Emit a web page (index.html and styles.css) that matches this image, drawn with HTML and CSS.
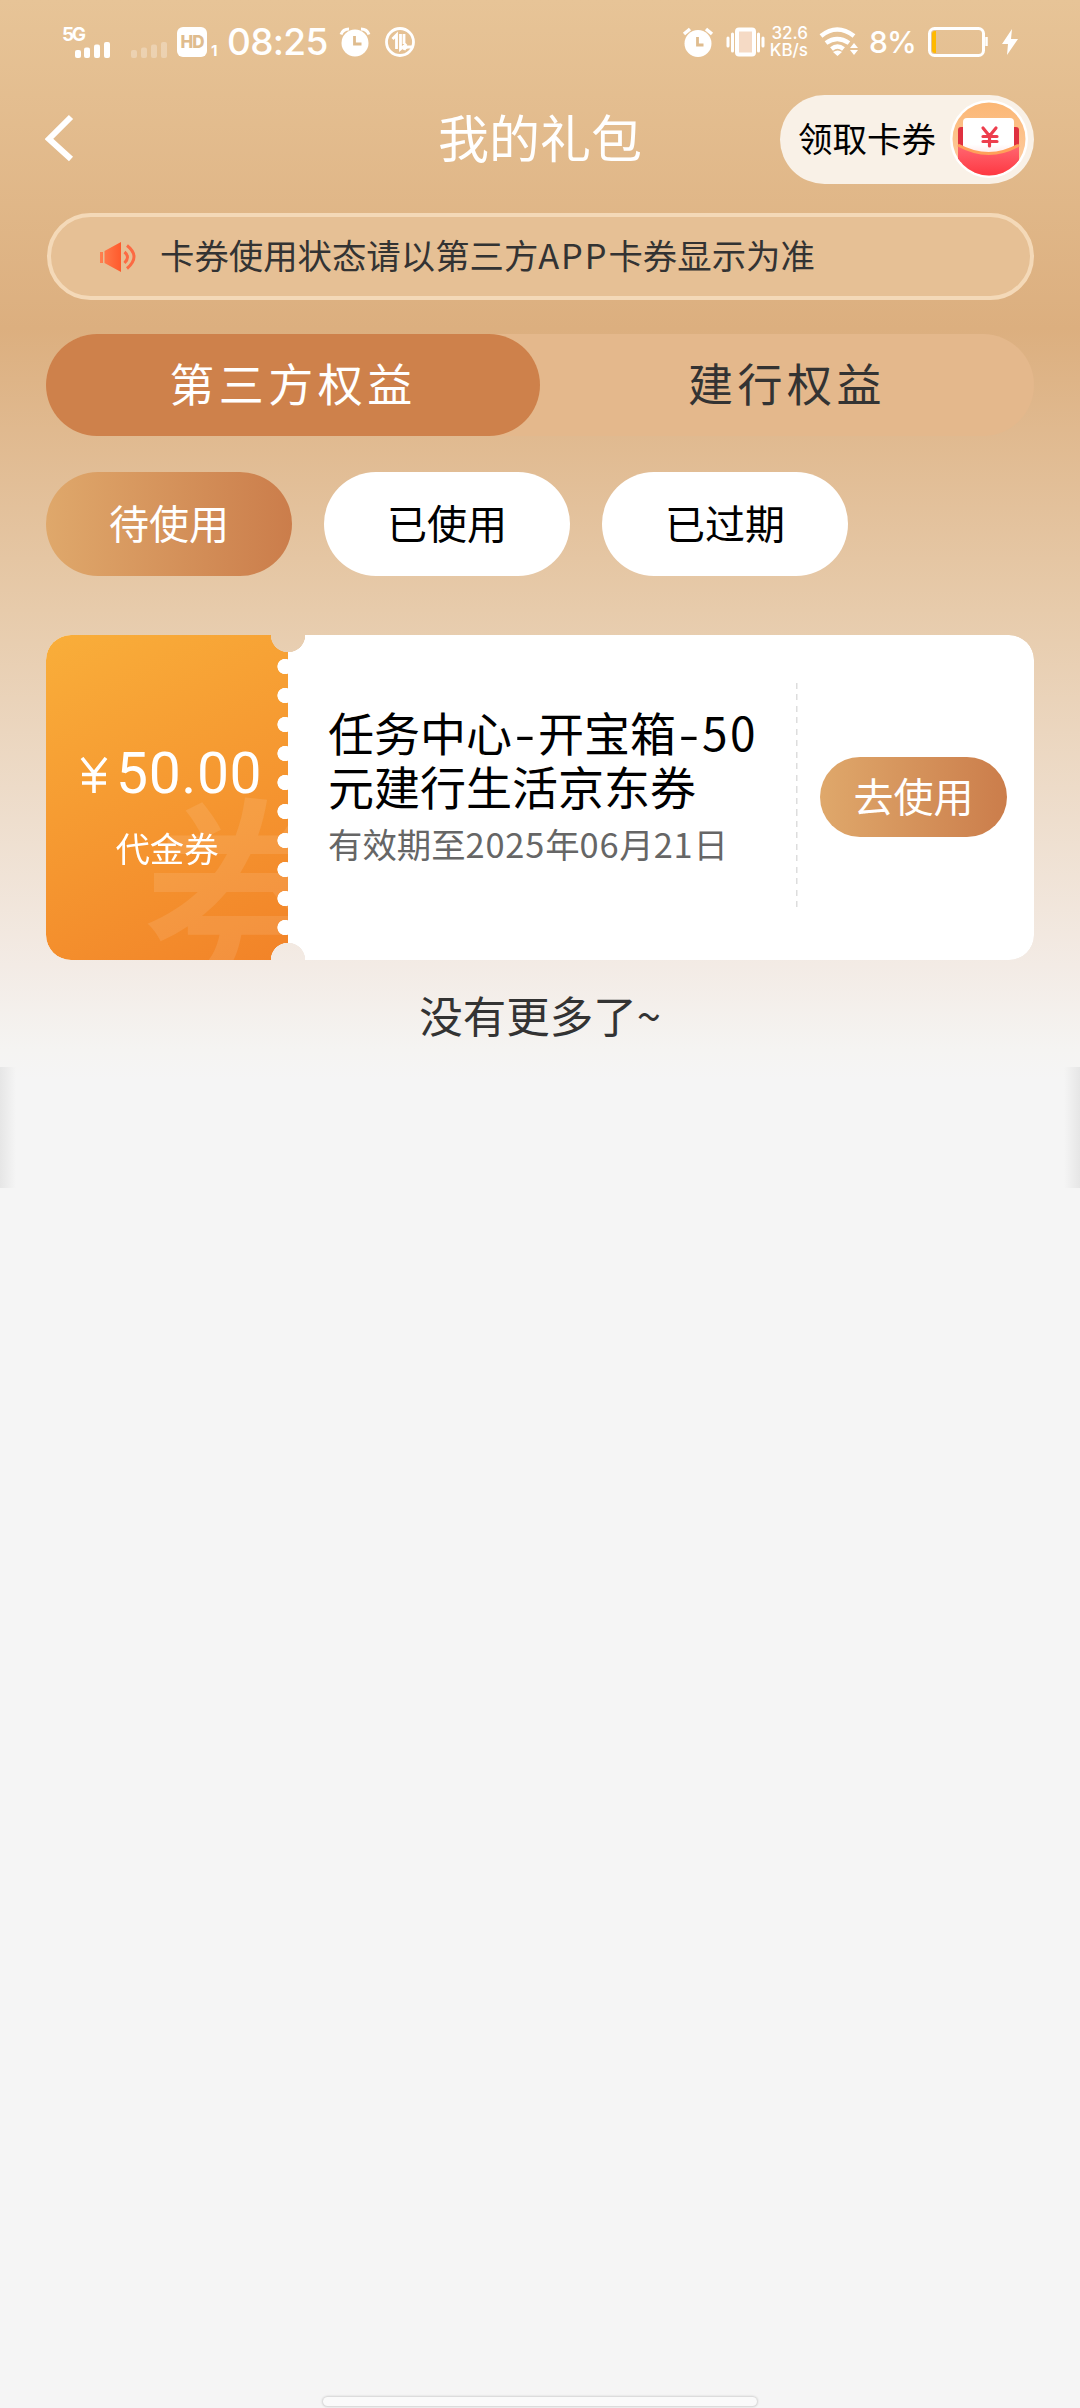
FILE: index.html
```html
<!DOCTYPE html>
<html lang="zh-CN">
<head>
<meta charset="utf-8">
<title>我的礼包</title>
<link rel="stylesheet" href="styles.css">
</head>
<body>
<div class="page">
  <div class="status">
    <svg class="signal" width="122" height="40" viewBox="0 0 122 40" fill="#fff">
      <g><rect x="13" y="28" width="6" height="8" rx="2"/><rect x="22" y="25.500" width="6" height="10.500" rx="2"/><rect x="32" y="22.500" width="6" height="13.500" rx="2"/><rect x="42" y="20" width="6" height="16" rx="2"/></g>
      <g opacity=".28"><rect x="69" y="28" width="6" height="8" rx="2"/><rect x="79" y="25.500" width="6" height="10.500" rx="2"/><rect x="89" y="22.500" width="6" height="13.500" rx="2"/><rect x="99" y="20" width="6" height="16" rx="2"/></g>
      <text class="net" x="0" y="18.500" textLength="24">5G</text>
    </svg>
    <span class="hd">HD</span><span class="sim">1</span>
    <span class="time">08:25</span>
    <svg class="alarm" width="32" height="32" viewBox="0 0 32 32"><circle cx="16" cy="17" r="13.500" fill="#fff"/><path d="M2 8.500 Q4 3 10 3M30 8.500Q28 3 22 3" fill="none" stroke="#fff" stroke-width="3"/><path d="M15.500 10v8h7" fill="none" stroke="#dfbc8e" stroke-width="2.800"/></svg>
    <svg class="data" width="32" height="32" viewBox="0 0 32 32" fill="none" stroke="#fff" stroke-width="2.800"><circle cx="16" cy="16" r="13.500"/><path d="M8.500 13l4-4v14M16.500 8v15l6-5M20 24q1-3 4-3h5M20 8v10"/></svg>
    <span class="grow"></span>
    <svg class="alarm2" width="32" height="32" viewBox="0 0 32 32"><circle cx="16" cy="17.500" r="13.500" fill="#fff"/><path d="M2 8l6-5M30 8l-6-5" stroke="#fff" stroke-width="3.500"/><path d="M15.500 11v8h6" fill="none" stroke="#dfbc8e" stroke-width="2.800"/></svg>
    <svg class="vibrate" width="40" height="30" viewBox="0 0 40 30" fill="none" stroke="#fff" stroke-width="3"><rect x="11" y="2.500" width="17" height="25" rx="2" fill="#f5dac5" stroke-width="4"/><path d="M6.500 7v17M32.500 7v17M2 11v8M37 11v8" stroke-linecap="round"/></svg>
    <span class="speed"><span>32.6</span><span>KB/s</span></span>
    <svg class="wifi" width="40" height="30" viewBox="0 0 40 30" fill="none" stroke="#fff" stroke-width="4.500"><path d="M2 9Q18-4 35 9M7 16q11-8 23 0M12.500 22q6-5 12 0"/><path d="M14 25q5-3 9 0l-4.500 4z" fill="#fff" stroke="none"/><path d="M31 21l4-5 4 5zM31 23l4 5 4-5z" fill="#fff" stroke="none"/></svg>
    <span class="percent">8%</span>
    <svg class="battery" width="60" height="30" viewBox="0 0 60 30"><rect x="1.500" y="1.500" width="54" height="27" rx="5" fill="none" stroke="#fff" stroke-width="3"/><path d="M4 7q0-3 3-3h1v22H7q-3 0-3-3z" fill="#ffb900"/><path d="M58.500 10v9" stroke="#fff" stroke-width="2.500"/></svg>
    <svg class="bolt" width="16" height="26" viewBox="0 0 16 26"><path d="M10 0L0 15h6L5 26 16 10H9z" fill="#fff"/></svg>
  </div>

  <header class="header">
    <svg class="back" width="30" height="48" viewBox="0 0 30 48"><path d="M26 3L4 25l22 20" fill="none" stroke="#fff" stroke-width="6"/></svg>
    <h1 class="title">我的礼包</h1>
    <div class="claim">
      <span>领取卡券</span>
      <svg width="78" height="78" viewBox="0 0 78 78">
        <defs>
          <clipPath id="disc"><circle cx="39" cy="39" r="36.500"/></clipPath>
          <linearGradient id="disc-bg" x2="0" y2="1"><stop stop-color="#fbb673"/><stop offset="1" stop-color="#fed0a8"/></linearGradient>
          <linearGradient id="pocket" x2="0" y2="1"><stop stop-color="#ff6872"/><stop offset="1" stop-color="#fe343e"/></linearGradient>
          <linearGradient id="paper" x2="0" y2="1"><stop offset=".6" stop-color="#fff"/><stop offset="1" stop-color="#ffd5d5"/></linearGradient>
        </defs>
        <circle cx="39" cy="39" r="39" fill="#fff"/>
        <g clip-path="url(#disc)">
          <rect width="78" height="78" fill="url(#disc-bg)"/>
          <rect x="8" y="27" width="61" height="35" rx="3" fill="#df303f"/>
          <rect x="13" y="18" width="51" height="44" rx="4" fill="url(#paper)"/>
          <path d="M8 45q31 17 61 0v33H8z" fill="url(#pocket)"/>
          <path d="M8 45q31 17 61 0" fill="none" stroke="#ffa05a" stroke-width="3"/>
        </g>
        <path d="M33 28l6.500 8 6.500-8M39.500 36v10M33 36.500h14M33 41.500h14" fill="none" stroke="#ed3e4d" stroke-width="3.200" stroke-linecap="round"/>
      </svg>
    </div>
  </header>

  <div class="notice">
    <svg width="38" height="32" viewBox="0 0 38 32"><defs><linearGradient id="horn" x1="0" x2="1"><stop stop-color="#ff8050"/><stop offset="1" stop-color="#ff5a2c"/></linearGradient></defs><path d="M1 11h3v11H1zM5.500 10L22 1v30L5.500 22z" fill="url(#horn)"/><path d="M25.500 11q6 5 0 11M28 4.500q14 11 0 23" fill="none" stroke="#fc6a43" stroke-width="3"/></svg>
    <span class="notice-text">卡券使用状态请以第三方<span class="app">APP</span>卡券显示为准</span>
  </div>

  <nav class="tabs"><span class="tab tab-on">第三方权益</span><span class="tab">建行权益</span></nav>
  <div class="filters"><span class="filter filter-on">待使用</span><span class="filter">已使用</span><span class="filter">已过期</span></div>

  <section class="card">
    <div class="value">
      <span class="watermark">券</span>
      <div class="amount"><svg width="28" height="36" viewBox="0 0 28 36" fill="none" stroke="#fff" stroke-width="3.600"><path d="M2 1l12 15L26 1M14 16v20M2 17.500h24M2 26h24"/></svg><span>50.00</span></div>
      <div class="kind">代金券</div>
      <div class="teeth"></div>
    </div>
    <div class="detail">
      <h2>任务中心<span class="dash">-</span>开宝箱<span class="dash">-</span><span class="fifty">50</span><br>元建行生活京东券</h2>
      <p>有效期至<span class="num">2025</span>年<span class="num">06</span>月<span class="num">21</span>日</p>
    </div>
    <div class="action"><span class="use">去使用</span></div>
  </section>
  <div class="end">没有更多了~</div>
  <div class="edges"></div>
  <div class="home"></div>
</div>
</body>
</html>
```
FILE: styles.css
```css
* { box-sizing: border-box; }
body { margin: 0; background: #f5f5f5; font-family: "Noto Sans CJK SC", sans-serif; }
.page {
  width: 1080px; height: 2408px; display: flex; flex-direction: column; overflow: hidden;
  background: linear-gradient(#e7c497 0, #dcaf7f 328px, #e7cbab 610px, #f3ebe5 965px, #f5f4f2 1050px, #f5f5f5 1080px);
}
svg { display: block; flex: none; }

.status { height: 84px; padding: 0 62px; display: flex; align-items: center; color: #fff; font-family: Inter, sans-serif; }
.signal { overflow: visible; margin-right: -7px; }
.net { font: 700 19px Inter, sans-serif; }
.hd { width: 30px; height: 30px; line-height: 30px; border-radius: 6px; background: #fff; color: #dfbc8e; font-size: 17px; font-weight: 800; text-align: center; letter-spacing: -1px; }
.sim { width: 10px; margin: 18px 0 0 4px; font-size: 15px; font-weight: 700; line-height: 16px; }
.time { width: 100px; margin-left: 6px; font-size: 37px; font-weight: 500; line-height: 44px; white-space: nowrap; letter-spacing: -.7px; }
.alarm { margin-left: 12px; }
.data { margin-left: 13px; }
.grow { flex: 1; }
.alarm2 { margin-left: -2px; }
.vibrate { margin-left: 12px; }
.speed { width: 38px; margin-left: 4px; display: flex; flex-direction: column; align-items: flex-end; font-size: 17px; line-height: 17px; font-weight: 500; }
.wifi { margin-left: 11px; }
.percent { width: 48px; margin-left: 10px; font-size: 30px; font-weight: 500; letter-spacing: -1px; }
.battery { margin-left: 11px; }
.bolt { margin-left: 14px; }

.header { height: 110px; padding: 0 46px; display: grid; grid-template-columns: 254px 1fr 254px; align-items: center; }
.back { margin-bottom: 2px; margin-left: -1px; }
.title { margin: 0; padding-bottom: 6px; text-align: center; color: #fff; font-size: 51px; font-weight: 400; line-height: 84px; }
.claim { height: 89px; padding: 0 6px 0 18px; border-radius: 45px; background: #f9f1e7; display: flex; align-items: center; justify-content: space-between; font-size: 34.500px; color: #000; }
.claim span { padding-bottom: 5px; }

.notice { height: 87px; margin: 19px 46px 0 47px; padding-left: 48px; border: 4px solid #f4d9b8; border-radius: 44px; background: #e6c095; display: flex; align-items: center; gap: 23px; font-size: 34.400px; color: #333; white-space: nowrap; }
.notice-text { padding-bottom: 5px; }
.app { letter-spacing: 1.900px; }

.tabs { height: 102px; margin: 34px 46px 0; border-radius: 51px; background: #e4b88c; display: flex; }
.tab { flex: 1; border-radius: 51px; text-align: center; font-size: 45px; letter-spacing: 4.500px; line-height: 98px; color: #333; }
.tab-on { background: #ce814b; color: #fff; }

.filters { margin: 36px 46px 0; display: flex; gap: 32px; }
.filter { width: 246px; height: 104px; border-radius: 52px; background: #fff; text-align: center; font-size: 40px; line-height: 100px; color: #000; }
.filter-on { background: linear-gradient(90deg, #dfa86b, #cb7d4b); color: #fff; }

.card {
  height: 325px; margin: 59px 46px 0; border-radius: 25px; display: flex; background: #fff;
  -webkit-mask: radial-gradient(circle at 242px 0, transparent 17px, #000 17.500px), radial-gradient(circle at 242px 325px, transparent 17px, #000 17.500px);
  -webkit-mask-composite: source-in;
  mask-composite: intersect;
}
.value { width: 242px; height: 325px; padding-top: 100px; position: relative; overflow: hidden; border-radius: 25px 0 0 25px; background: linear-gradient(155deg, #f9ae3a, #f28328); color: #fff; }
.watermark { position: absolute; left: 95px; top: 134px; font-size: 220px; font-weight: 500; line-height: 240px; color: rgba(255, 255, 255, .1); }
.amount { position: relative; height: 76px; margin-left: 34px; display: flex; align-items: center; gap: 8px; font: 400 57px Roboto, sans-serif; letter-spacing: .6px; }
.amount svg { margin-top: 4px; }
.kind { position: relative; text-align: center; font-size: 34.400px; line-height: 50px; margin-top: 11px; }
.teeth { position: absolute; right: 0; top: 17px; width: 11px; height: 290px; background: radial-gradient(circle at 8px 14.500px, #fff 7.300px, transparent 7.900px) 0 0 / 11px 29px repeat-y; }
.detail { width: 508px; padding: 69px 0 0 40px; }
.detail h2 { margin: 0; font-size: 46px; font-weight: 400; line-height: 54px; color: #000; white-space: nowrap; }
.dash { display: inline-block; width: 26px; text-align: center; transform: scaleX(1.3); }
.fifty { letter-spacing: 2.500px; }
.detail p { margin: 6px 0 0; font-size: 34.400px; line-height: 50px; color: #666; white-space: nowrap; }
.num { letter-spacing: .8px; }
.action { width: 238px; height: 225px; margin-top: 48px; padding-left: 24px; display: flex; align-items: center; background: repeating-linear-gradient(#ddd 0 6px, transparent 6px 11.500px) 0 0 / 1.500px 100% no-repeat; }
.use { width: 187px; height: 80px; margin-top: 2px; border-radius: 40px; background: linear-gradient(90deg, #dfa86b, #cb7d4b); color: #fff; text-align: center; font-size: 40px; line-height: 76px; }
.end { height: 107px; padding-top: 25px; text-align: center; font-size: 43.500px; line-height: 60px; color: #333; }
.edges { height: 121px; background: linear-gradient(90deg, #e6e6e6, transparent 16px calc(100% - 16px), #e6e6e6); }
.home { width: 434px; height: 9px; margin: auto auto 2px; border-radius: 5px; background: #fafafa; box-shadow: 0 0 2px 1px #d2d2d2; }
```
